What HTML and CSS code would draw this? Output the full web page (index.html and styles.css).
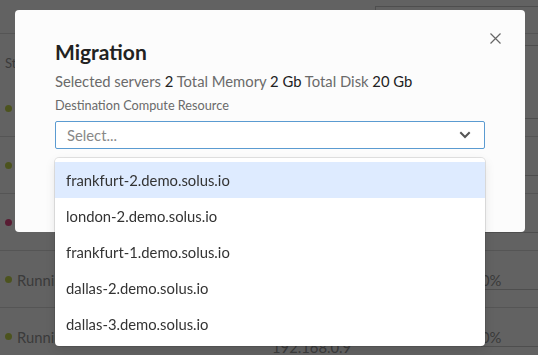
FILE: index.html
```html
<!DOCTYPE html>
<html lang="en">
<head>
<meta charset="utf-8">
<title>Migration</title>
<link rel="stylesheet" href="styles.css">
</head>
<body>
<div class="page">
  <div class="topbar"><div class="search"></div></div>
  <div class="thead"><span class="c-status">Status</span><span class="c-name">Name</span><span class="c-usage">Usage</span></div>
  <div class="row"><span class="c-status"><i class="dot ok"></i>Running</span><span class="c-name"><span>server-1</span><span>192.168.0.5</span></span><span class="c-usage"><span>0%</span><i class="bar"></i></span></div>
  <div class="row"><span class="c-status"><i class="dot ok"></i>Running</span><span class="c-name"><span>server-2</span><span>192.168.0.6</span></span><span class="c-usage"><span>0%</span><i class="bar"></i></span></div>
  <div class="row"><span class="c-status"><i class="dot err"></i>Stopped</span><span class="c-name"><span>server-3</span><span>192.168.0.7</span></span><span class="c-usage"><span>0%</span><i class="bar"></i></span></div>
  <div class="row"><span class="c-status"><i class="dot ok"></i>Running</span><span class="c-name"><span>server-4</span><span>192.168.0.8</span></span><span class="c-usage"><span>0%</span><i class="bar"></i></span></div>
  <div class="row"><span class="c-status"><i class="dot ok"></i>Running</span><span class="c-name"><span>server-5</span><span>192.168.0.9</span></span><span class="c-usage"><span>0%</span><i class="bar"></i></span></div>
</div>

<div class="overlay">
  <div class="modal">
    <button class="close" aria-label="Close">
      <svg width="11" height="11" viewBox="0 0 11 11"><path d="M0.5 0.5 L10.5 10.5 M10.5 0.5 L0.5 10.5" stroke="#666" stroke-width="1.2" fill="none"/></svg>
    </button>
    <h1 class="title">Migration</h1>
    <p class="summary">Selected servers <span class="val">2</span> Total Memory <span class="val">2 Gb</span> Total Disk <span class="val">20 Gb</span></p>
    <label class="label">Destination Compute Resource</label>
    <div class="select">
      <div class="control">
        <span class="placeholder">Select...</span>
        <svg class="chevron" width="12" height="8" viewBox="0 0 12 8"><path d="M1.3 1.3 L6 6 L10.7 1.3" stroke="#555" stroke-width="2" fill="none"/></svg>
      </div>
      <div class="menu">
        <div class="option active">frankfurt-2.demo.solus.io</div>
        <div class="option">london-2.demo.solus.io</div>
        <div class="option">frankfurt-1.demo.solus.io</div>
        <div class="option">dallas-2.demo.solus.io</div>
        <div class="option">dallas-3.demo.solus.io</div>
      </div>
    </div>
  </div>
</div>
</body>
</html>
```

FILE: styles.css
```css
* { box-sizing: border-box; }
html, body { margin: 0; padding: 0; }
body {
  font-family: "Lato", "Open Sans", "Liberation Sans", sans-serif;
  background: #ffffff;
  color: #888;
  width: 538px;
  height: 355px;
  overflow: hidden;
}

/* underlying page */
.page { width: 538px; }
.topbar {
  height: 34px;
  border-bottom: 1px solid #dddddd;
  display: flex;
  justify-content: flex-end;
  padding-top: 6px;
}
.search {
  width: 163px;
  height: 40px;
  border: 1px solid #cccccc;
  border-right: none;
}
.thead {
  height: 46px;
  display: grid;
  grid-template-columns: 270px 205px 63px;
  align-items: center;
  padding-left: 5px;
  font-size: 13px;
  color: #999;
  padding-bottom: 14px;
}
.row {
  height: 57px;
  border-bottom: 1px solid #dddddd;
  display: grid;
  grid-template-columns: 267px 209px 62px;
  align-items: center;
  padding-left: 5px;
  font-size: 14.8px;
  color: #999;
}
.c-status { display: flex; align-items: center; }
.dot { width: 7px; height: 7px; border-radius: 50%; margin-right: 5px; display: inline-block; }
.dot.ok { background: #c6d94e; }
.dot.err { background: #e64a84; }
.c-name { display: flex; flex-direction: column; line-height: 18px; padding-top: 2px; }
.c-usage { display: flex; flex-direction: column; height: 57px; justify-content: flex-start; }
.c-usage span { line-height: 20px; margin-top: 19px; }
.bar { display: block; height: 1px; background: #cccccc; margin-top: -1px; }

/* overlay & modal */
.overlay {
  position: fixed;
  inset: 0;
  background: rgba(0, 0, 0, 0.615);
}
.modal {
  position: relative;
  margin: 10px 0 0 15px;
  width: 510px;
  height: 222px;
  background: #fcfcfc;
  border-radius: 4px;
  padding: 29px 40px 0 40px;
  color: #666;
}
.close {
  position: absolute;
  top: 23px;
  right: 24px;
  width: 11px;
  height: 11px;
  padding: 0;
  border: none;
  background: none;
  display: block;
}
.close svg { display: block; }
.title {
  margin: 0;
  font-size: 21px;
  line-height: 26px;
  font-weight: 700;
  color: #222;
}
.summary {
  margin: 6px 0 0;
  font-size: 14.8px;
  line-height: 20px;
  color: #6a6a6a;
}
.summary .val { color: #222; }
.label {
  display: block;
  margin-top: 6px;
  font-size: 12.7px;
  line-height: 16px;
  color: #6a6a6a;
}
.select { position: relative; margin-top: 8px; }
.control {
  height: 28px;
  border: 1px solid #5b9bd1;
  border-radius: 2px;
  background: #fff;
  display: flex;
  align-items: center;
  justify-content: space-between;
  padding: 0 13px 0 11px;
}
.placeholder { font-size: 14.8px; color: #888; }
.chevron { display: block; }
.menu {
  position: absolute;
  top: 37px;
  left: 0;
  right: 0;
  background: #fff;
  border-radius: 4px;
  padding: 4px 0;
  box-shadow: 0 0 0 1px rgba(0,0,0,0.1), 0 4px 11px rgba(0,0,0,0.1);
}
.option {
  height: 36px;
  display: flex;
  align-items: center;
  padding: 0 11px;
  font-size: 14.8px;
  color: #333;
}
.option.active { background: #deebff; }
```
